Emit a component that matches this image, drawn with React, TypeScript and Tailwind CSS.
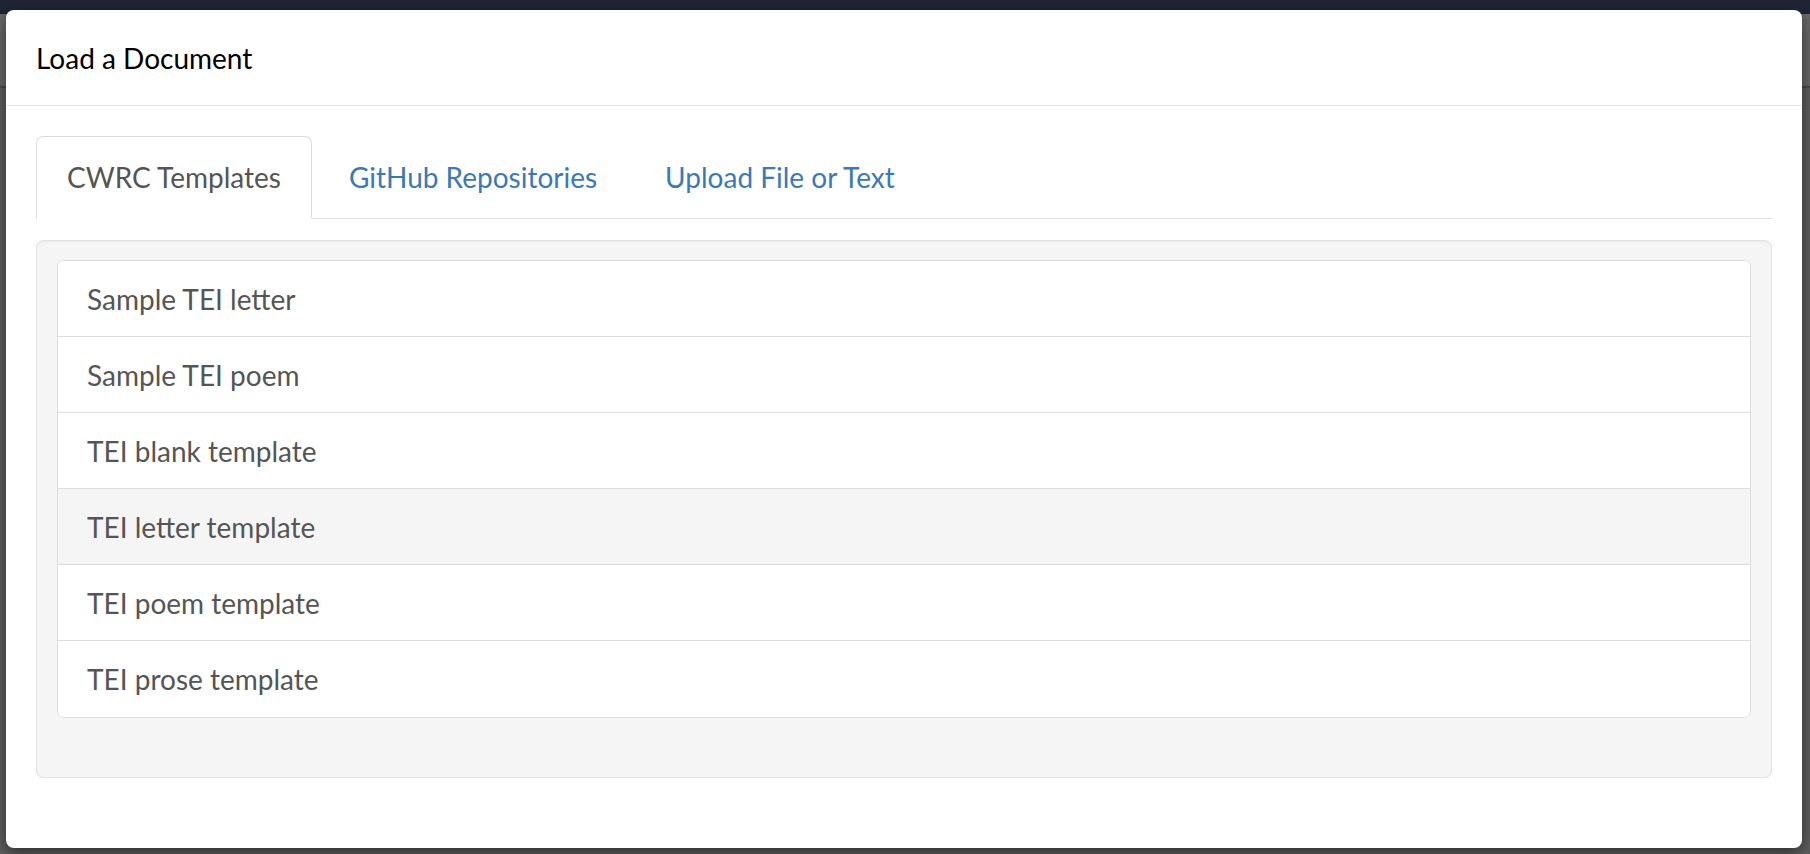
import React from "react";

const items = [
  "Sample TEI letter",
  "Sample TEI poem",
  "TEI blank template",
  "TEI letter template",
  "TEI poem template",
  "TEI prose template",
];

export default function App() {
  return (
    <div
      className="relative h-[854px] w-full overflow-hidden bg-[#5e5e5e]"
      style={{ fontFamily: "Lato, 'Noto Sans', sans-serif" }}
    >
      {/* backdrop (page behind the dialog) */}
      <div className="h-[14px] bg-[#1f2535]" />
      <div className="h-[74px] border-b-2 border-[#4a4a4a] bg-[#686868]" />
      <div className="h-[766px] bg-[#5e5e5e]" />

      {/* dialog */}
      <div className="absolute left-[6px] top-[10px] flex h-[838px] w-[1796px] flex-col rounded-[8px] bg-white shadow-[0_5px_15px_rgba(0,0,0,0.5)]">
        <div className="flex h-[96px] items-center border-b border-[#e5e5e5] px-[30px]">
          <h4 className="text-[28px] leading-[40px] text-black">Load a Document</h4>
        </div>

        <div className="p-[30px]">
          <div className="flex border-b border-[#dddddd]">
            <div className="mb-[-1px] mr-[6px] rounded-t-[7px] border border-[#dddddd] border-b-transparent bg-white px-[30px] py-[20px] text-[28px] leading-[41px] text-[#555555]">
              CWRC Templates
            </div>
            <div className="mb-[-1px] mr-[6px] border border-transparent px-[30px] py-[20px] text-[28px] leading-[41px] text-[#3a79b6]">
              GitHub Repositories
            </div>
            <div className="mb-[-1px] mr-[6px] border border-transparent px-[30px] py-[20px] text-[28px] leading-[41px] text-[#3a79b6]">
              Upload File or Text
            </div>
          </div>

          <div className="mt-[21px] rounded-[7px] border border-[#e3e3e3] bg-[#f5f5f5] px-[20px] pb-[20px] pt-[19px] shadow-[inset_0_1px_1px_rgba(0,0,0,0.05)]">
            <div className="mb-[39px] overflow-hidden rounded-[7px] border border-[#dddddd] bg-white">
              {items.map((t, i) => (
                <div
                  key={t}
                  className={
                    "flex h-[76px] items-center px-[29px] text-[28px] text-[#555555] " +
                    (i < items.length - 1 ? "border-b border-[#dddddd] " : "h-[75px] ") +
                    (i === 3 ? "bg-[#f5f5f5]" : "bg-white")
                  }
                >
                  {t}
                </div>
              ))}
            </div>
          </div>
        </div>
      </div>
    </div>
  );
}
